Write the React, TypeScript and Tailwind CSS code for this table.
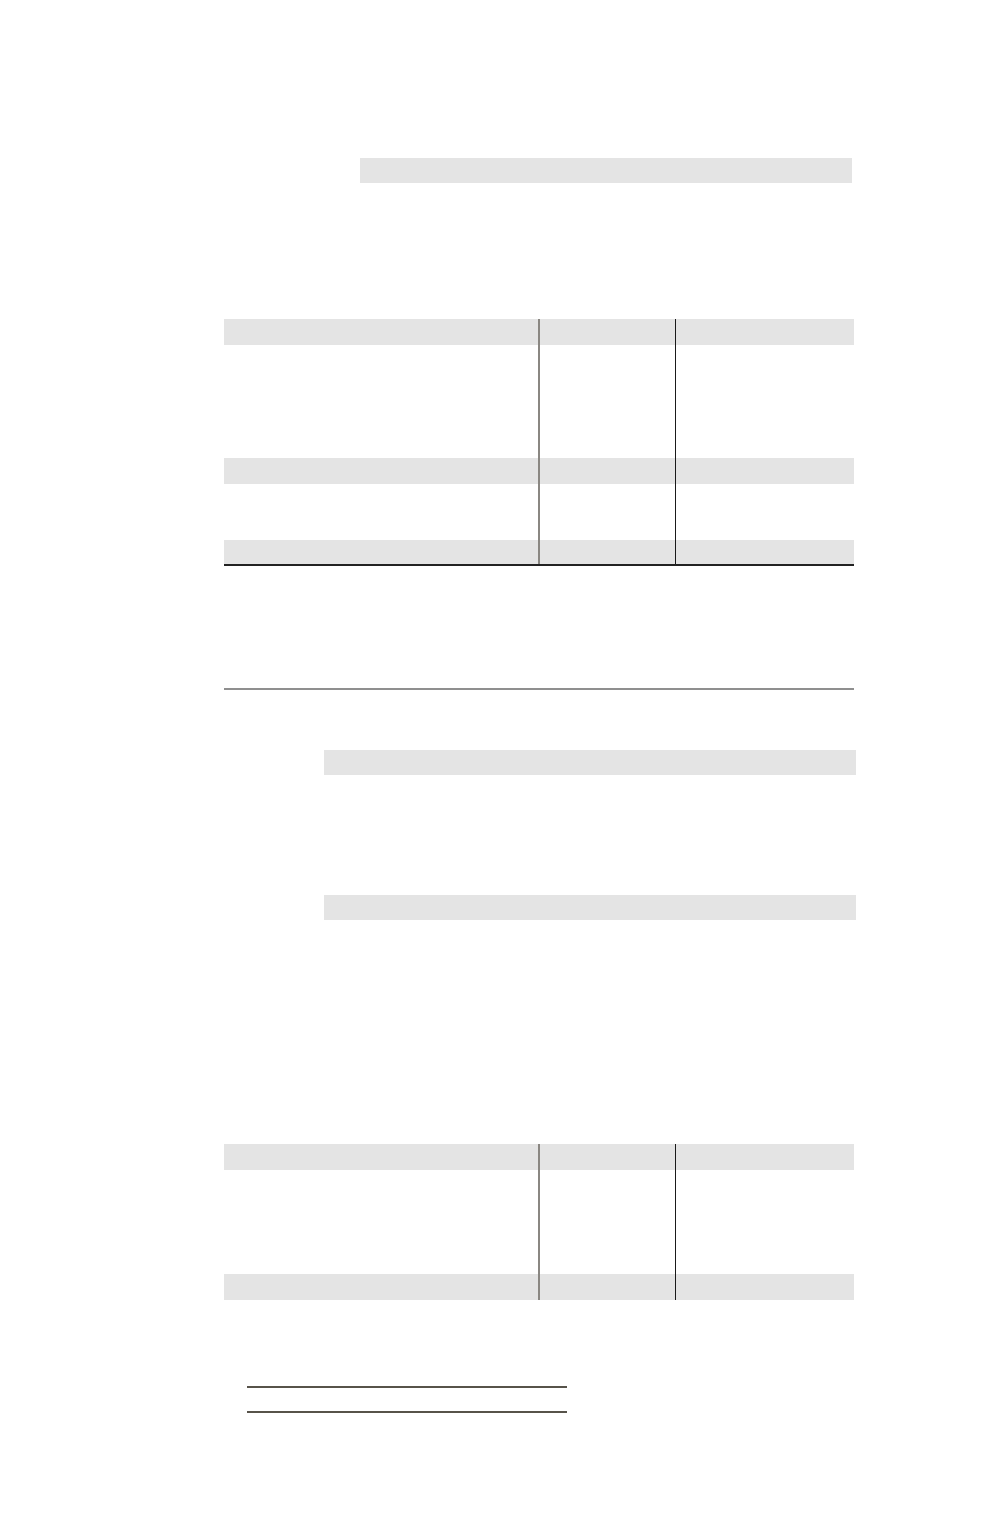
import React from 'react';

const Bar = ({ className }: { className: string }) => <div className={`h-[25px] bg-[#e4e4e4] ${className}`} />;

const Row = ({ shaded, h }: { shaded?: boolean; h: string }) => {
  const bg = shaded ? 'bg-[#e4e4e4]' : 'bg-white';
  return (
    <>
      <div className={`${h} ${bg} border-r-2 border-[#8a8782]`} />
      <div className={`${h} ${bg} border-r border-[#1a1a1a]`} />
      <div className={`${h} ${bg}`} />
    </>
  );
};

const GridTable = ({ rows }: { rows: { shaded?: boolean; h: string }[] }) => (
  <div className="grid grid-cols-[316px_136px_178px] w-[630px] ml-[224px]">
    {rows.map((r, i) => (
      <Row key={i} shaded={r.shaded} h={r.h} />
    ))}
  </div>
);

export default function App() {
  return (
    <div className="w-[1000px] min-h-[1528px] bg-white pt-[158px] font-['Liberation_Sans',sans-serif]">
      {/* top field */}
      <Bar className="ml-[360px] w-[492px]" />

      {/* first table */}
      <div className="mt-[136px]">
        <div className="border-b-2 border-[#222] w-[630px] ml-[224px]">
          <div className="grid grid-cols-[316px_136px_178px]">
            <Row shaded h="h-[26px]" />
            <Row h="h-[29px]" />
            <Row h="h-[30px]" />
            <Row h="h-[28px]" />
            <Row h="h-[26px]" />
            <Row shaded h="h-[26px]" />
            <Row h="h-[28px]" />
            <Row h="h-[28px]" />
            <Row shaded h="h-[24px]" />
          </div>
        </div>
        <div className="ml-[224px] w-[630px] h-[124px] border-b-2 border-[#8f8f8f]" />
      </div>

      {/* fields */}
      <Bar className="mt-[60px] ml-[324px] w-[532px]" />
      <Bar className="mt-[120px] ml-[324px] w-[532px]" />

      {/* second table */}
      <div className="mt-[224px]">
        <GridTable
          rows={[
            { shaded: true, h: 'h-[26px]' },
            { h: 'h-[26px]' },
            { h: 'h-[26px]' },
            { h: 'h-[26px]' },
            { h: 'h-[26px]' },
            { shaded: true, h: 'h-[26px]' },
          ]}
        />
      </div>

      {/* signature lines */}
      <div className="mt-[86px] ml-[247px] w-[320px] h-[2px] bg-[#57534a]" />
      <div className="mt-[23px] ml-[247px] w-[320px] h-[2px] bg-[#57534a]" />
    </div>
  );
}
